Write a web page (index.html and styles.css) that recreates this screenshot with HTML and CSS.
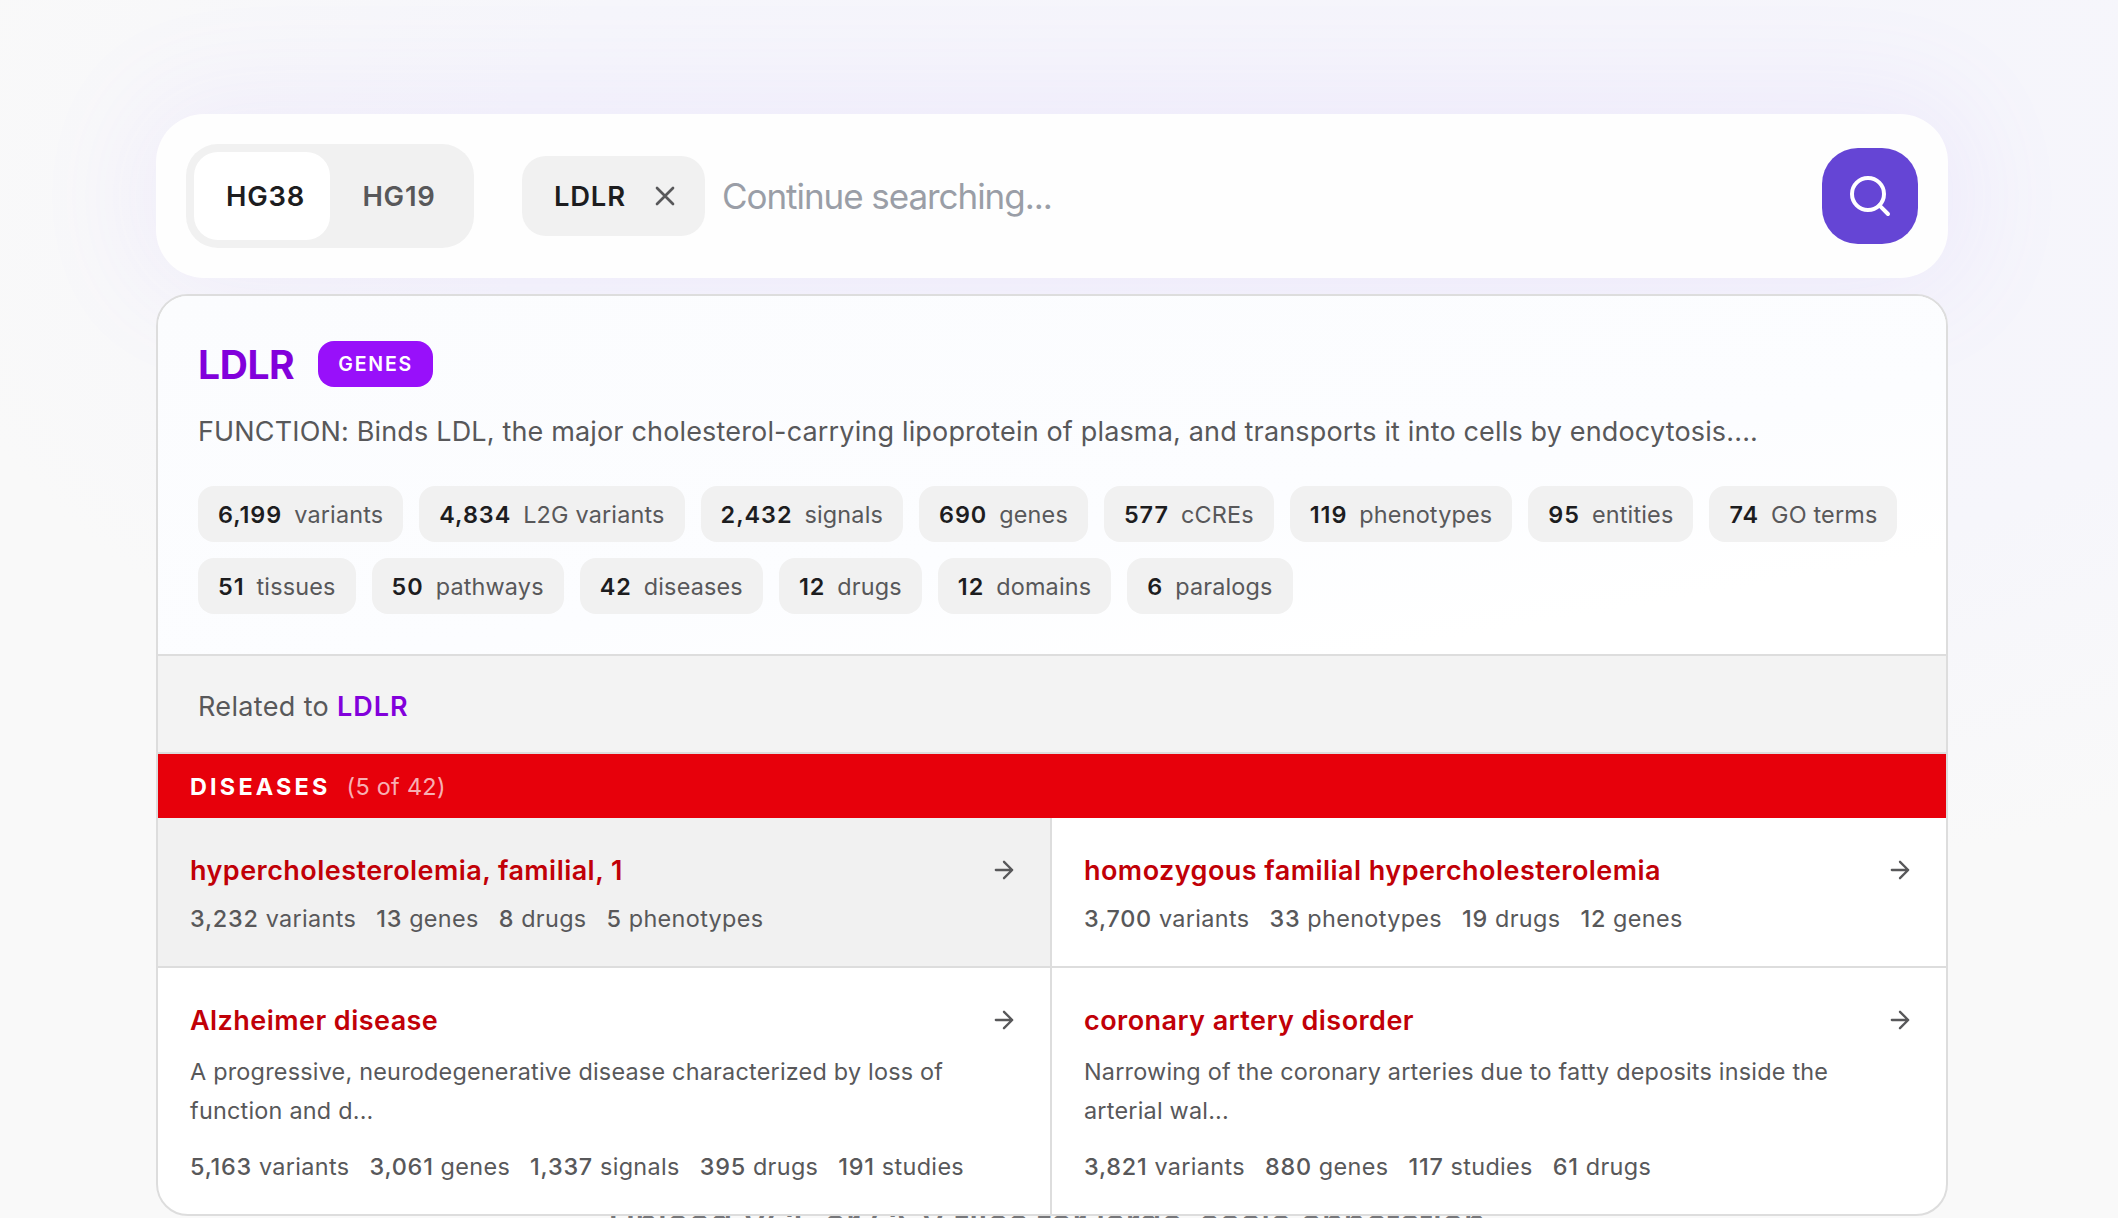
FILE: index.html
```html
<!DOCTYPE html>
<html lang="en">

<head>
    <meta charset="UTF-8">
    <meta name="viewport" content="width=device-width, initial-scale=1.0">
    <title>Gene Search</title>
    <link rel="stylesheet" href="styles.css">
</head>

<body>
    <main class="search">
        <form class="search-bar">
            <div class="build-toggle">
                <button type="button" class="build-btn active">HG38</button>
                <button type="button" class="build-btn">HG19</button>
            </div>
            <div class="search-chip">
                <span>LDLR</span>
                <svg class="chip-close" viewBox="0 0 24 24"><path d="M18 6 6 18M6 6l12 12" /></svg>
            </div>
            <input class="search-input" type="text" placeholder="Continue searching...">
            <button type="button" class="search-btn" aria-label="Search">
                <svg viewBox="0 0 24 24"><circle cx="11" cy="11" r="8" /><path d="m21 21-4.3-4.3" /></svg>
            </button>
        </form>

        <section class="results">
            <div class="gene">
                <div class="gene-head">
                    <h1>LDLR</h1>
                    <span class="badge">GENES</span>
                </div>
                <p class="gene-text">FUNCTION: Binds LDL, the major cholesterol-carrying lipoprotein of plasma, and transports it into cells by endocytosis....</p>
                <div class="counts">
                    <span class="count"><b>6,199</b>variants</span>
                    <span class="count"><b>4,834</b>L2G variants</span>
                    <span class="count"><b>2,432</b>signals</span>
                    <span class="count"><b>690</b>genes</span>
                    <span class="count"><b>577</b>cCREs</span>
                    <span class="count"><b>119</b>phenotypes</span>
                    <span class="count"><b>95</b>entities</span>
                    <span class="count"><b>74</b>GO terms</span>
                    <span class="count"><b>51</b>tissues</span>
                    <span class="count"><b>50</b>pathways</span>
                    <span class="count"><b>42</b>diseases</span>
                    <span class="count"><b>12</b>drugs</span>
                    <span class="count"><b>12</b>domains</span>
                    <span class="count"><b>6</b>paralogs</span>
                </div>
            </div>

            <div class="related">Related to <b>LDLR</b></div>

            <div class="group-head">
                <h2>DISEASES</h2>
                <span>(5 of 42)</span>
            </div>

            <div class="cards">
                <a class="card selected">
                    <div class="card-title">
                        <h3>hypercholesterolemia, familial, 1</h3>
                        <svg class="arrow" viewBox="0 0 24 24"><path d="M5 12h14M12 5l7 7-7 7" /></svg>
                    </div>
                    <div class="stats">
                        <span><b>3,232</b> variants</span>
                        <span><b>13</b> genes</span>
                        <span><b>8</b> drugs</span>
                        <span><b>5</b> phenotypes</span>
                    </div>
                </a>
                <a class="card">
                    <div class="card-title">
                        <h3>homozygous familial hypercholesterolemia</h3>
                        <svg class="arrow" viewBox="0 0 24 24"><path d="M5 12h14M12 5l7 7-7 7" /></svg>
                    </div>
                    <div class="stats">
                        <span><b>3,700</b> variants</span>
                        <span><b>33</b> phenotypes</span>
                        <span><b>19</b> drugs</span>
                        <span><b>12</b> genes</span>
                    </div>
                </a>
                <a class="card">
                    <div class="card-title">
                        <h3>Alzheimer disease</h3>
                        <svg class="arrow" viewBox="0 0 24 24"><path d="M5 12h14M12 5l7 7-7 7" /></svg>
                    </div>
                    <p class="card-text">A progressive, neurodegenerative disease characterized by loss of function and d...</p>
                    <div class="stats">
                        <span><b>5,163</b> variants</span>
                        <span><b>3,061</b> genes</span>
                        <span><b>1,337</b> signals</span>
                        <span><b>395</b> drugs</span>
                        <span><b>191</b> studies</span>
                    </div>
                </a>
                <a class="card">
                    <div class="card-title">
                        <h3>coronary artery disorder</h3>
                        <svg class="arrow" viewBox="0 0 24 24"><path d="M5 12h14M12 5l7 7-7 7" /></svg>
                    </div>
                    <p class="card-text">Narrowing of the coronary arteries due to fatty deposits inside the arterial wal...</p>
                    <div class="stats">
                        <span><b>3,821</b> variants</span>
                        <span><b>880</b> genes</span>
                        <span><b>117</b> studies</span>
                        <span><b>61</b> drugs</span>
                    </div>
                </a>
            </div>
        </section>
    </main>

    <p class="upload-note">Upload VCF or CSV files for large-scale annotation</p>
</body>

</html>
```
FILE: styles.css
```css
* {
    box-sizing: border-box;
    margin: 0;
    padding: 0;
}

body {
    height: 1218px;
    overflow: hidden;
    background: radial-gradient(1500px 700px at 1400px 200px, #f5f4fb 0%, #f6f6fb 60%, #f9f9f9 100%) #f9f9f9;
    color: #1d1d1f;
    font-family: Inter, "Liberation Sans", sans-serif;
    font-size: 27px;
}

svg {
    fill: none;
    stroke: currentColor;
    stroke-width: 2;
    stroke-linecap: round;
    stroke-linejoin: round;
}

.search {
    position: relative;
    z-index: 1;
    width: 1792px;
    margin: 114px 0 0 156px;
}

.search-bar {
    display: flex;
    align-items: center;
    height: 164px;
    margin-bottom: 16px;
    padding: 0 30px;
    border-radius: 48px;
    background-color: #fefefe;
    box-shadow: 0 0 110px 20px rgba(150, 120, 255, 0.08);
}

.build-toggle {
    display: flex;
    width: 288px;
    height: 104px;
    padding: 8px;
    border-radius: 32px;
    background-color: #f1f1f1;
}

.build-btn {
    width: 136px;
    padding-left: 2px;
    border: none;
    border-radius: 24px;
    background-color: transparent;
    color: #58585a;
    font-family: inherit;
    font-size: 27.4px;
    font-weight: 600;
    letter-spacing: 0.8px;
}

.build-btn.active {
    padding-left: 7px;
    background-color: white;
    color: #1d1d1f;
}

.search-chip {
    display: flex;
    align-items: center;
    justify-content: space-between;
    width: 183px;
    height: 80px;
    margin-left: 48px;
    padding: 0 24px 0 32px;
    border-radius: 24px;
    background-color: #f1f1f1;
    font-size: 27.4px;
    font-weight: 600;
    letter-spacing: 0.8px;
}

.chip-close {
    width: 32px;
    height: 32px;
    color: #58585a;
}

.search-input {
    flex: 1;
    margin-left: 17px;
    border: none;
    outline: none;
    background-color: transparent;
    font-family: inherit;
    font-size: 35px;
    letter-spacing: -1.05px;
}

.search-input::placeholder {
    color: #9a9ea7;
}

.search-btn {
    display: flex;
    align-items: center;
    justify-content: center;
    width: 96px;
    height: 96px;
    border: none;
    border-radius: 36px;
    background-color: #6545d5;
    color: white;
}

.search-btn svg {
    width: 48px;
    height: 48px;
}

.results {
    overflow: hidden;
    height: 922px;
    border: 2px solid #dddddd;
    border-radius: 32px;
    background-color: white;
}

.gene {
    height: 360px;
    padding: 40px;
    border-bottom: 2px solid #dddddd;
    background: linear-gradient(170deg, #fbfcfe 0%, #fcfdff 60%, #ffffff 85%);
}

.gene-head {
    display: flex;
    align-items: center;
    gap: 24px;
    height: 56px;
}

.gene-head h1 {
    color: #8200db;
    font-size: 39px;
    font-weight: 700;
    letter-spacing: -0.4px;
}

.badge {
    height: 46px;
    padding: 0 20px;
    border-radius: 16px;
    background-color: #9810fa;
    color: white;
    font-size: 19.5px;
    font-weight: 600;
    line-height: 46px;
    letter-spacing: 1.8px;
}

.gene-text {
    margin-top: 17px;
    color: #58585a;
    font-size: 27px;
    line-height: 46px;
    letter-spacing: 0.16px;
    white-space: nowrap;
}

.counts {
    display: flex;
    flex-wrap: wrap;
    gap: 16px;
    margin-top: 31px;
}

.count {
    height: 56px;
    padding: 0 20px;
    border-radius: 16px;
    background-color: #f1f1f1;
    color: #58585a;
    font-size: 23.4px;
    line-height: 57px;
    letter-spacing: 0.18px;
}

.count b {
    margin-right: 12px;
    color: #1d1d1f;
    font-weight: 600;
    letter-spacing: 0.95px;
}

.related {
    height: 98px;
    padding-left: 40px;
    border-bottom: 2px solid #dddddd;
    background-color: #f3f3f3;
    color: #58585a;
    line-height: 101px;
    letter-spacing: 0.35px;
}

.related b {
    color: #8200db;
    font-weight: 600;
    letter-spacing: 1px;
}

.group-head {
    display: flex;
    align-items: center;
    gap: 16px;
    height: 64px;
    padding-left: 32px;
    background-color: #e7000b;
    color: white;
    font-size: 23.4px;
    letter-spacing: 0.3px;
}

.group-head h2 {
    font-size: 23.4px;
    font-weight: 700;
    letter-spacing: 3.2px;
}

.group-head span {
    color: rgba(255, 255, 255, 0.7);
}

.cards {
    display: grid;
    grid-template-columns: 1fr 1fr;
    grid-template-rows: 150px 246px;
}

.card {
    padding: 32px;
    border-bottom: 2px solid #dddddd;
    color: #58585a;
}

.card:nth-child(odd) {
    border-right: 2px solid #dddddd;
}

.card:nth-child(n+3) {
    border-bottom: none;
}

.card.selected {
    background-color: #f1f1f1;
}

.card-title {
    display: flex;
    align-items: center;
    justify-content: space-between;
    height: 40px;
}

.card-title h3 {
    color: #c10007;
    font-size: 27px;
    font-weight: 600;
    letter-spacing: 0.45px;
}

.arrow {
    width: 28px;
    height: 28px;
}

.card-text {
    width: 780px;
    margin-top: 12px;
    font-size: 23.4px;
    line-height: 39px;
    letter-spacing: 0.22px;
}

.stats {
    display: flex;
    gap: 20px;
    margin-top: 13px;
    font-size: 23.4px;
    line-height: 32px;
    letter-spacing: 0.35px;
}

.card-text + .stats {
    margin-top: 21px;
}

.stats b {
    font-weight: 500;
    letter-spacing: 0.8px;
}

/* sits partly behind the results panel */
.upload-note {
    width: 1792px;
    margin: -16px 0 0 151px;
    color: #77777a;
    font-size: 36.8px;
    font-weight: 500;
    line-height: 44px;
    letter-spacing: -0.25px;
    text-align: center;
}
```
